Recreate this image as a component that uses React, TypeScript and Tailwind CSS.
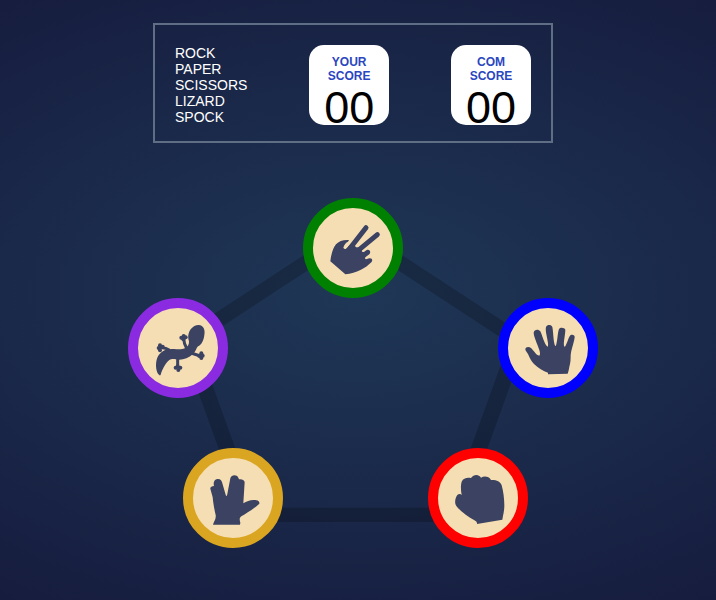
import type { ReactNode } from 'react';

type Move = {
  name: string;
  ring: string;
  place: string;
  icon: ReactNode;
};

const moves: Move[] = [
  {
    name: 'Scissors',
    ring: 'border-[#008000]',
    place: 'left-[125px] top-[-25px]',
    icon: (
      <>
        <path d="M91 199C93 179 99 159 108 148C117 138 129 134 147 135L144 140C138 142 132 149 130 158Q132 163 137 162L150 150L165 153Q167 158 173 157L190 160L185 167Q186 173 193 170L200 165C209 161 214 171 208 178L196 187Q194 191 198 193L208 190C217 189 219 197 214 202C197 219 170 235 136 238Z" />
        <g stroke="#3b4262" strokeWidth="15" strokeLinecap="round">
          <path d="M198 98L150 160" />
          <path d="M232 119L174 167" />
        </g>
      </>
    ),
  },
  {
    name: 'Paper',
    ring: 'border-[#0000ff]',
    place: 'right-[-70px] top-[75px]',
    icon: (
      <path d="M159 238V233C145 228 129 219 117 207C109 199 103 187 99 177C95 171 91 167 91 162C92 155 102 154 108 159C116 166 123 181 133 182Q137 178 133 165C127 147 116 124 116 113C118 102 131 102 136 109C142 122 148 147 156 154Q160 158 159 145C157 127 150 107 153 96C157 88 168 88 172 96C175 111 175 136 179 149Q182 157 184 148C188 133 188 112 192 102C196 96 208 97 211 104C211 119 205 140 207 152Q209 160 213 149C219 137 222 124 227 120C233 117 240 121 239 127C238 138 230 162 228 173C226 181 228 195 225 207C222 217 222 227 218 236Z" />
    ),
  },
  {
    name: 'Rock',
    ring: 'border-[#ff0000]',
    place: 'bottom-[-25px] right-0',
    icon: (
      <path d="M156 237Q158 230 147 225C128 214 104 197 94 183C88 175 90 159 97 150C101 146 107 146 110 150C107 135 107 119 110 110C115 99 126 97 138 99C146 88 161 87 168 98C177 93 191 93 198 105C213 104 226 109 230 121C235 139 238 161 238 181C238 197 235 206 232 224Z" />
    ),
  },
  {
    name: 'Spock',
    ring: 'border-[#daa520]',
    place: 'bottom-[-25px] left-[5px]',
    icon: (
      <path d="M99 239C101 231 109 223 107 210C103 194 99 169 98 157L91 131C90 127 95 124 102 123C99 113 103 103 112 102C121 101 126 107 127 115L137 149Q140 158 142 147L151 100C154 89 170 88 175 98L177 103C184 101 193 105 194 111L190 175C202 167 216 163 229 166C236 167 239 171 238 176C224 190 202 203 184 214C177 219 179 226 181 233L180 239Z" />
    ),
  },
  {
    name: 'Lizard',
    ring: 'border-[#8a2be2]',
    place: 'left-[-50px] top-[75px]',
    icon: (
      <>
        <path d="M103 240C93 233 91 209 95 194C99 179 109 168 124 164L134 163C149 160 160 164 171 162C177 161 182 159 186 155C192 149 194 141 190 131C187 109 203 90 221 90C236 91 241 106 238 120C236 137 229 150 219 154C214 159 212 171 204 177C192 188 177 194 163 194C151 194 141 189 133 195C119 207 111 226 107 239Q105 243 103 240Z" />
        <g stroke="#3b4262" strokeWidth="9" strokeLinecap="round" fill="none">
          <path d="M132 165Q122 157 108 158" />
          <path d="M185 160Q177 148 176 130" />
          <path d="M198 174L226 183" />
          <path d="M158 190V216" />
        </g>
        <g>
          <circle cx="105" cy="151" r="6" />
          <circle cx="101" cy="159" r="6" />
          <circle cx="105" cy="166" r="6" />
          <circle cx="113" cy="155" r="6" />
          <circle cx="169" cy="128" r="6" />
          <circle cx="176" cy="123" r="6" />
          <circle cx="182" cy="127" r="6" />
          <circle cx="175" cy="133" r="6" />
          <circle cx="229" cy="175" r="6" />
          <circle cx="233" cy="182" r="6" />
          <circle cx="229" cy="189" r="6" />
          <circle cx="223" cy="183" r="6" />
          <circle cx="152" cy="218" r="6" />
          <circle cx="160" cy="225" r="6" />
          <circle cx="166" cy="218" r="6" />
          <circle cx="158" cy="214" r="6" />
        </g>
      </>
    ),
  },
];

function ScoreCard({ label }: { label: string }) {
  return (
    <div className="size-20 rounded-[15px] bg-white pt-[10px] text-center">
      <h2 className="px-4 text-[12px] leading-[14px] font-bold text-[#2a46c0]">{label}</h2>
      <p className="text-[45px] leading-[49px] text-black">00</p>
    </div>
  );
}

export default function App() {
  return (
    <div className="flex min-h-screen flex-col items-center gap-20 bg-[radial-gradient(110%_75%_at_50%_49%,#1f3756,#141639)] pt-[23px] pr-[10px] font-['Liberation_Sans',Arial,sans-serif]">
      <header className="flex w-full max-w-[400px] items-center justify-between border-2 border-[#606e85] px-5 pt-5 pb-4">
        <ul className="text-[14px] leading-4 text-white">
          <li>ROCK</li>
          <li>PAPER</li>
          <li>SCISSORS</li>
          <li>LIZARD</li>
          <li>SPOCK</li>
        </ul>
        <ScoreCard label="YOUR SCORE" />
        <ScoreCard label="COM SCORE" />
      </header>

      <main className="relative h-[300px] w-[350px]">
        <svg
          className="size-full"
          viewBox="0 0 329 313"
          preserveAspectRatio="none"
          fill="none"
          aria-hidden="true"
        >
          <path
            stroke="#000"
            strokeWidth="15"
            opacity=".2"
            d="M164.5 9.27L9.26 122.06l59.296 182.495h191.888l59.296-182.495L164.5 9.27z"
          />
        </svg>
        {moves.map((move) => (
          <button
            key={move.name}
            type="button"
            aria-label={move.name}
            className={`absolute size-[100px] cursor-pointer rounded-full border-[10px] bg-[#f5deb3] ${move.ring} ${move.place}`}
          >
            <svg className="size-20" viewBox="39 39 240 240" fill="#3b4262" aria-hidden="true">
              {move.icon}
            </svg>
          </button>
        ))}
      </main>
    </div>
  );
}
